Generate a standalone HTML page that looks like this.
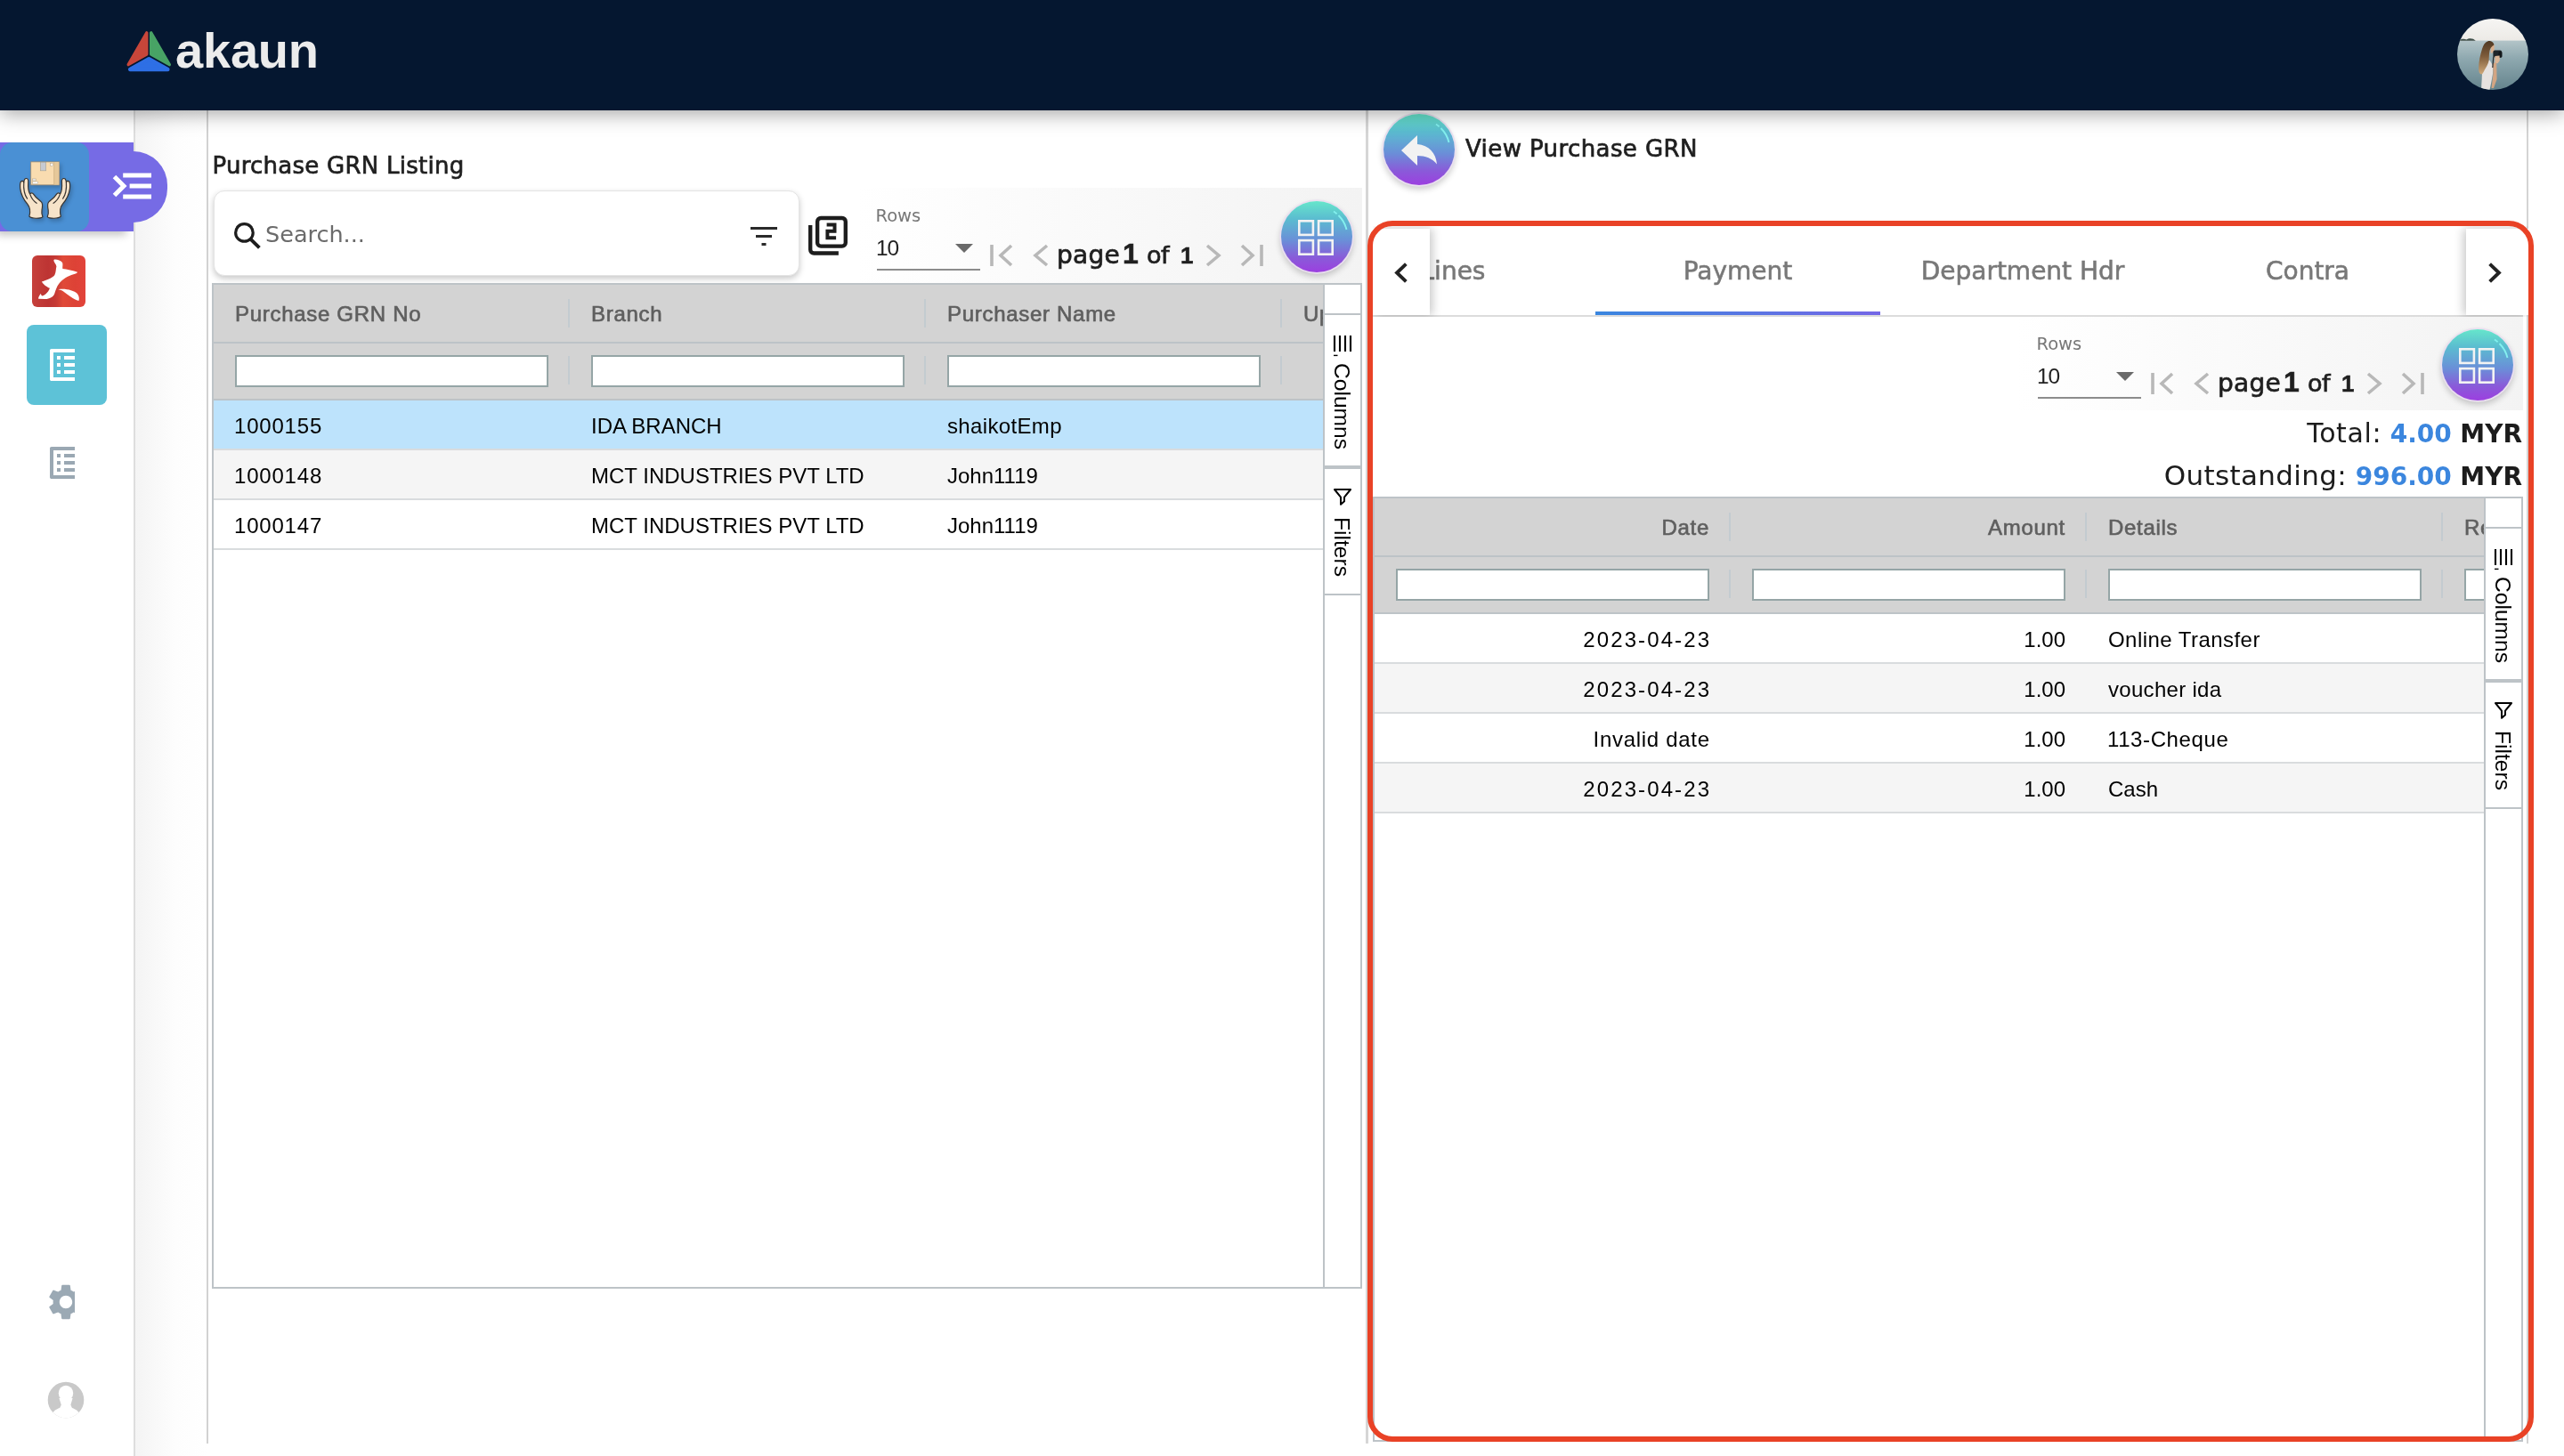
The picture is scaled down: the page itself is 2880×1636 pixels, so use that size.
<!DOCTYPE html>
<html lang="en">
<head>
<meta charset="utf-8">
<title>Purchase GRN Listing</title>
<style>
*{box-sizing:border-box;margin:0;padding:0}
html,body{width:2880px;height:1636px;overflow:hidden;background:#fff}
body{position:relative;font-family:"Liberation Sans",sans-serif;color:#000}
.abs{position:absolute}
.pp{font-family:"DejaVu Sans","Liberation Sans",sans-serif}
.t{position:absolute;white-space:nowrap;line-height:1}
/* header */
#hdr{left:0;top:0;width:2880px;height:124px;background:#051730;box-shadow:0 3px 22px rgba(0,0,0,.38);z-index:50}
/* generic grid */
.grid{position:absolute;border:2px solid #bdc3c7;background:#fff;overflow:hidden}
.ghead{position:absolute;left:0;top:0;height:66px;background:#d3d3d3;border-bottom:2px solid #bdc3c7}
.gfilt{position:absolute;left:0;top:66px;height:64px;background:#d3d3d3;border-bottom:2px solid #bdc3c7}
.hsep{position:absolute;top:16px;width:2px;height:32px;background:#c3cbd0}
.fin{position:absolute;top:13px;height:36px;width:352px;border:2px solid #95a5a6;background:#fff}
.htx{position:absolute;top:0;line-height:66px;font-weight:400;font-size:24px;color:#5f5f5f;white-space:nowrap;letter-spacing:.7px;-webkit-text-stroke:.65px #5f5f5f}
.row{position:absolute;left:0;height:56px;border-bottom:2px solid #d9dcde;background:#fff}
.row.odd{background:#f5f5f5}
.row.sel{background:#bde3fc}
.cell{position:absolute;top:0;line-height:58px;font-size:24px;white-space:nowrap;color:#000}
.side{position:absolute;top:0;bottom:0;width:42px;border-left:2px solid #bdc3c7;background:#fff}
.sbtn{position:absolute;left:0;width:40px}
.vtx{position:absolute;white-space:nowrap;transform-origin:0 0;transform:rotate(90deg);font-size:24.6px;line-height:1;color:#000}
.cbtn{width:80px;height:80px;border-radius:50%;background:linear-gradient(to bottom,#66e6cb 0%,#5bbcd0 25%,#6a8fd8 55%,#8a5ad9 80%,#9c3fe0 100%);box-shadow:0 0 0 1.8px #eadff0,0 4px 7px 1px rgba(0,0,0,.2)}
#root{position:absolute;left:0;top:0;width:2880px;height:1636px;overflow:hidden;transform:translateZ(0)}
.tab{top:37px;width:320px;text-align:center;font-size:28px;color:#787878;-webkit-text-stroke:.55px #787878}
.blue{color:#3b86de}
b{font-weight:700}
.tot{font-size:30px;color:#1c1c1c;line-height:34px}
.tot b{font-size:28px}
.r{text-align:right}
.d{letter-spacing:2.1px;transform:translateX(2.1px)}
.med{-webkit-text-stroke:.7px currentColor}
.gfilt .hsep{top:14px}
</style>
</head>
<body>
<div id="root">

<!-- ===== HEADER ===== -->
<div id="hdr" class="abs">
  <svg class="abs" style="left:138px;top:30px" width="60" height="56" viewBox="0 0 60 56">
    <path d="M26.8 6.9 L26.8 31 L6.2 42.6 Z" fill="#c8463a" stroke="#c8463a" stroke-width="3.4" stroke-linejoin="round"/>
    <path d="M31.7 6.9 L31.7 31 L52.3 42.6 Z" fill="#48a365" stroke="#48a365" stroke-width="3.4" stroke-linejoin="round"/>
    <path d="M29.25 36.2 L8.2 47.9 L50.3 47.9 Z" fill="#2e6fe5" stroke="#2e6fe5" stroke-width="4.6" stroke-linejoin="round"/>
  </svg>
  <div class="t" style="left:197px;top:29px;font-size:56px;font-weight:700;color:#ececec;letter-spacing:-.2px">akaun</div>
  <svg class="abs" id="avatar" style="left:2760px;top:21px" width="80" height="80" viewBox="0 0 80 80">
    <defs>
      <clipPath id="avclip"><circle cx="40" cy="40" r="40"/></clipPath>
      <linearGradient id="sea" x1="0" y1="0" x2="0" y2="1"><stop offset="0" stop-color="#b3c4c8"/><stop offset=".35" stop-color="#8fa9b0"/><stop offset="1" stop-color="#64838c"/></linearGradient>
      <linearGradient id="sky" x1="0" y1="0" x2="0" y2="1"><stop offset="0" stop-color="#f6f5f3"/><stop offset="1" stop-color="#eceae6"/></linearGradient>
      <linearGradient id="hair" x1="0" y1="0" x2="0" y2="1"><stop offset="0" stop-color="#4e3823"/><stop offset=".45" stop-color="#7d5b3a"/><stop offset="1" stop-color="#cfa97a"/></linearGradient>
    </defs>
    <g clip-path="url(#avclip)">
      <rect x="0" y="0" width="80" height="25" fill="url(#sky)"/>
      <rect x="0" y="24.6" width="80" height="56" fill="url(#sea)"/>
      <path d="M2 24.8 C4 22.6 8 22.4 10.5 23.6 C13 21.6 18 21.6 20.8 24.8 Z" fill="#3f4f4a"/>
      <path d="M30.5 50 L36.5 46.5 L40.3 53 L40 62 L38.2 72 L36.5 80 L27 80 L28 62 Z" fill="#e6e2e0"/>
      <path d="M40.3 50 L44.2 49 L44.6 68 L41 78 L38.5 78 L40.5 62 Z" fill="#d2a583"/>
      <path d="M38.4 28.6 L41.8 29.6 L41.6 35.5 L40.2 38.6 L37.5 38.4 Z" fill="#d9b08e"/>
      <path d="M35.2 25 C38.5 24.8 41.3 26.6 41.4 29.5 C38.8 31 37 33 36.5 36 C35.6 40 36 44 35.4 48 C34.4 52 32.4 55 30.8 57.5 C29.8 60 28.6 62 27.3 62.6 C25.5 62 24.6 61 24.4 59 C23.4 52 25.5 42 28 34 C29.5 29 31.5 26 35.2 25 Z" fill="url(#hair)"/>
      <rect x="40.4" y="35.6" width="9.8" height="7.8" rx="2" fill="#1f2529"/>
      <rect x="46.4" y="36.8" width="4" height="7" rx="1.6" fill="#14181b"/>
      <path d="M42.4 42 L47.6 41.6 L47.8 47 L45.5 50.2 L42.2 49.6 Z" fill="#dbb596"/>
      <path d="M40.8 42.5 L39.8 55" stroke="#2a2a2a" stroke-width="1.2" fill="none"/>
    </g>
  </svg>
</div>

<!-- ===== SIDEBAR ===== -->
<div class="abs" id="sidebar" style="left:0;top:124px;width:152px;height:1512px;background:#fff;border-right:2px solid #dedede"></div>
<div class="abs" id="strip" style="left:152px;top:124px;width:82px;height:1512px;background:linear-gradient(to right,#f4f4f4,#fdfdfd 55%,#fff)"></div>
<div class="abs" style="left:232px;top:124px;width:2px;height:1498px;background:#d2d2d2"></div>


<div class="abs" style="left:0;top:160px;width:150px;height:100px;background:#766be5;box-shadow:-6px 6px 9px -2px rgba(0,0,0,.24)"></div>
<div class="abs" style="left:150px;top:170px;width:38px;height:80px;background:#766be5;border-radius:0 40px 40px 0"></div>
<div class="abs" style="left:0;top:160px;width:100px;height:100px;background:#4a90d4;border-radius:14px"></div>
<svg class="abs" style="left:0;top:150px;filter:drop-shadow(2px 3px 2px rgba(0,0,0,.2))" width="200" height="114" viewBox="0 0 2554 1456">
  <rect x="443" y="407" width="408" height="332" fill="#f9dcb0" stroke="#9a866c" stroke-width="10"/>
  <rect x="775" y="412" width="71" height="322" fill="#e6c89a"/>
  <path d="M775 412V734" stroke="#c9ab7c" stroke-width="8"/>
  <rect x="580" y="412" width="80" height="122" fill="#c6cad2" stroke="#a9a395" stroke-width="8"/>
  <rect x="722" y="428" width="40" height="40" fill="#fff" stroke="#b8a78c" stroke-width="7"/>
  <rect x="468" y="650" width="46" height="28" fill="#ececec" stroke="#b8a78c" stroke-width="7"/>
  <rect x="468" y="690" width="76" height="34" fill="#fff" stroke="#b8a78c" stroke-width="7"/>
  <g fill="#f6e3c9" stroke="#38332f" stroke-width="15" stroke-linejoin="round" stroke-linecap="round">
    <path d="M420 1190 C440 1120 430 1060 395 1015 C340 950 300 870 290 790 C285 740 285 710 300 690 C315 675 335 680 342 702 C345 660 360 642 380 645 C400 648 408 665 405 700 C400 770 405 830 430 870 C440 850 465 845 480 870 C510 920 560 950 595 985 C615 1010 610 1050 600 1100 C595 1140 600 1170 612 1195 C590 1222 450 1226 420 1190 Z"/><path d="M342 700 C335 800 350 880 390 935 M435 880 C450 930 490 975 525 1000" fill="none"/>
    <g transform="translate(1292 0) scale(-1 1)"><path d="M420 1190 C440 1120 430 1060 395 1015 C340 950 300 870 290 790 C285 740 285 710 300 690 C315 675 335 680 342 702 C345 660 360 642 380 645 C400 648 408 665 405 700 C400 770 405 830 430 870 C440 850 465 845 480 870 C510 920 560 950 595 985 C615 1010 610 1050 600 1100 C595 1140 600 1170 612 1195 C590 1222 450 1226 420 1190 Z"/><path d="M342 700 C335 800 350 880 390 935 M435 880 C450 930 490 975 525 1000" fill="none"/></g>
  </g>
</svg>
<svg class="abs" style="left:124px;top:192px" width="48" height="34" viewBox="0 0 48 34"><path d="M4.5 6.5L15 17L4.5 27.5" fill="none" stroke="#fff" stroke-width="5"/><path d="M14.2 5H46 M21.6 17H46 M14.2 29H46" stroke="#fff" stroke-width="5" fill="none"/></svg>
<!-- red app icon -->
<div class="abs" style="left:36px;top:287px;width:60px;height:58px;border-radius:6px;background:linear-gradient(to right,#c6403b 0%,#bd3433 30%,#c63a35 45%,#e04a38 58%,#dd4236 80%,#e2433a 100%)"></div>
<svg class="abs" style="left:20px;top:270px" width="160" height="91" viewBox="0 0 2560 1456"><path fill="#fff" d="M655 345 C700 338 770 360 800 400 C815 430 800 470 805 510 C880 520 1000 540 1072 570 C1062 592 1040 600 1000 612 C900 640 800 700 740 780 C700 830 680 900 660 960 C640 1020 560 1062 480 1056 L370 1052 C365 1020 390 990 410 958 L432 1000 C480 990 540 950 575 860 C540 850 480 820 430 745 C500 720 600 690 650 640 C690 590 680 520 695 470 C690 430 650 400 645 365 Z"/><path fill="#fff" d="M725 885 C850 860 1000 900 1070 960 C1100 1000 1110 1050 1095 1088 C1000 1060 900 980 820 920 C790 900 760 890 725 885 Z"/></svg>
<!-- teal active -->
<div class="abs" style="left:30px;top:365px;width:90px;height:90px;border-radius:8px;background:#5dc2d7"></div>
<div class="abs" style="left:50px;top:386px;width:34px;height:48px;overflow:hidden"><svg width="48" height="48" viewBox="0 0 24 24"><path fill="#fff" d="M19 5v14H5V5h14m1.1-2H3.9c-.5 0-.9.4-.9.9v16.2c0 .4.4.9.9.9h16.2c.4 0 .9-.5.9-.9V3.9c0-.5-.5-.9-.9-.9zM11 7h6v2h-6V7zm0 4h6v2h-6v-2zm0 4h6v2h-6zM7 7h2v2H7zm0 4h2v2H7zm0 4h2v2H7z"/></svg></div>
<div class="abs" style="left:50px;top:496px;width:34px;height:48px;overflow:hidden"><svg width="48" height="48" viewBox="0 0 24 24"><path fill="#9aa8b3" d="M19 5v14H5V5h14m1.1-2H3.9c-.5 0-.9.4-.9.9v16.2c0 .4.4.9.9.9h16.2c.4 0 .9-.5.9-.9V3.9c0-.5-.5-.9-.9-.9zM11 7h6v2h-6V7zm0 4h6v2h-6v-2zm0 4h6v2h-6zM7 7h2v2H7zm0 4h2v2H7zm0 4h2v2H7z"/></svg></div>
<div class="abs" style="left:50px;top:1439px;width:34px;height:48px;overflow:hidden"><svg width="48" height="48" viewBox="0 0 24 24"><path fill="#9ba9b4" d="M19.14 12.94c.04-.3.06-.61.06-.94 0-.32-.02-.64-.07-.94l2.03-1.58c.18-.14.23-.41.12-.61l-1.92-3.32c-.12-.22-.37-.29-.59-.22l-2.39.96c-.5-.38-1.03-.7-1.62-.94l-.36-2.54c-.04-.24-.24-.41-.48-.41h-3.84c-.24 0-.43.17-.47.41l-.36 2.54c-.59.24-1.13.57-1.62.94l-2.39-.96c-.22-.08-.47 0-.59.22L2.74 8.87c-.12.21-.08.47.12.61l2.03 1.58c-.05.3-.09.63-.09.94s.02.64.07.94l-2.03 1.58c-.18.14-.23.41-.12.61l1.92 3.32c.12.22.37.29.59.22l2.39-.96c.5.38 1.03.7 1.62.94l.36 2.54c.05.24.24.41.48.41h3.84c.24 0 .44-.17.47-.41l.36-2.54c.59-.24 1.13-.56 1.62-.94l2.39.96c.22.08.47 0 .59-.22l1.92-3.32c.12-.22.07-.47-.12-.61l-2.01-1.58zM12 15.6c-1.98 0-3.6-1.62-3.6-3.6s1.62-3.6 3.6-3.6 3.6 1.62 3.6 3.6-1.62 3.6-3.6 3.6z"/></svg></div>
<svg class="abs" style="left:52px;top:1551px" width="44" height="44" viewBox="0 0 44 44"><defs><clipPath id="avc"><circle cx="22" cy="22" r="20.3"/></clipPath></defs><circle cx="22" cy="22" r="20.3" fill="#c9c9c9"/><g clip-path="url(#avc)" fill="#fff"><ellipse cx="22" cy="14.4" rx="8.2" ry="8.7"/><path d="M14.4 20 L16.8 27.5 L15.2 31 L28.9 31 L27.4 27.5 L29.6 20 Z"/><ellipse cx="22" cy="51" rx="20.8" ry="21.3"/></g></svg>

<!-- ===== LEFT PANEL ===== -->
<div class="t pp med" style="left:238.5px;top:172.5px;font-size:26px;color:#1f1f1f;letter-spacing:.25px">Purchase GRN Listing</div>


<!-- toolbar background -->
<div class="abs" style="left:240px;top:211px;width:1290px;height:108px;background:linear-gradient(to right,#ffffff 56%,#f3f3f3)"></div>
<!-- search box -->
<div class="abs" id="search" style="left:240px;top:214px;width:658px;height:96px;border-radius:12px;background:#fff;border:1px solid #e4e4e4;box-shadow:0 3px 7px rgba(0,0,0,.22)">
  <svg class="abs" style="left:20.5px;top:34px" width="32" height="32" viewBox="0 0 34 34"><circle cx="13.2" cy="13.2" r="10.4" fill="none" stroke="#1d1d1d" stroke-width="3.4"/><path d="M20.6 20.8 L31.2 31.2" stroke="#1d1d1d" stroke-width="4.2"/></svg>
  <div class="t pp" style="left:57px;top:36px;font-size:25.5px;color:#6b6b6b;letter-spacing:0">Search...</div>
  <svg class="abs" style="left:600px;top:38px" width="36" height="26" viewBox="0 0 36 26"><path d="M2 3.5H32 M8 12.5H26 M14.5 21.5H19.5" stroke="#2a2a2a" stroke-width="3.2" fill="none"/></svg>
</div>
<!-- copy icon -->
<svg class="abs" style="left:906px;top:240.5px" width="48" height="47.5" viewBox="0 0 48 48"><rect x="12" y="4" width="32" height="32" rx="4" fill="none" stroke="#1d1d1d" stroke-width="4.4"/><path d="M4 12V40a4 4 0 0 0 4 4H36" fill="none" stroke="#1d1d1d" stroke-width="4.4"/><path d="M22.6 11.6H31.6V19H23.4V26.6H33.2" fill="none" stroke="#1d1d1d" stroke-width="4"/></svg>
<div class="abs" id="tb1" style="left:0;top:0">
<!-- rows select -->
<div class="t pp" style="left:983.5px;top:232.5px;font-size:19.5px;color:#777">Rows</div>
<div class="t" style="left:984px;top:267px;font-size:24.5px;color:#222;letter-spacing:-1.2px">10</div>
<svg class="abs" style="left:1072px;top:273px" width="22" height="12" viewBox="0 0 22 12"><path d="M1 1H21L11 11Z" fill="#6a6a6a"/></svg>
<div class="abs" style="left:985px;top:302px;width:116px;height:2px;background:#8c8c8c"></div>
<!-- paginator -->
<svg class="abs" style="left:1110px;top:273px" width="30" height="28" viewBox="0 0 30 28"><path d="M4 2V26" stroke="#b8b8b8" stroke-width="3.6" fill="none"/><path d="M26 3L14 14L26 25" stroke="#b8b8b8" stroke-width="3.6" fill="none"/></svg>
<svg class="abs" style="left:1158px;top:273px" width="22" height="28" viewBox="0 0 22 28"><path d="M18 3L5 14L18 25" stroke="#b8b8b8" stroke-width="3.6" fill="none"/></svg>
<div class="t pp med" style="left:1187px;top:272.5px;font-size:28px;color:#1f1f1f;letter-spacing:.3px">page</div>
<div class="t" style="left:1261px;top:269px;font-size:32px;font-weight:700;color:#1f1f1f;-webkit-text-stroke:.6px #1f1f1f">1</div>
<div class="t pp med" style="left:1288px;top:273px;font-size:27px;color:#1f1f1f;letter-spacing:-.5px">of</div>
<div class="t" style="left:1326px;top:274px;font-size:26px;font-weight:700;color:#1f1f1f;-webkit-text-stroke:.5px #1f1f1f">1</div>
<svg class="abs" style="left:1352px;top:273px" width="22" height="28" viewBox="0 0 22 28"><path d="M4 3L17 14L4 25" stroke="#b8b8b8" stroke-width="3.6" fill="none"/></svg>
<svg class="abs" style="left:1391px;top:273px" width="30" height="28" viewBox="0 0 30 28"><path d="M26 2V26" stroke="#b8b8b8" stroke-width="3.6" fill="none"/><path d="M4 3L16 14L4 25" stroke="#b8b8b8" stroke-width="3.6" fill="none"/></svg>
<!-- circle button -->
<div class="abs cbtn" style="left:1438.5px;top:225.5px">
  <svg class="abs" style="left:19.5px;top:21.5px" width="40" height="40" viewBox="0 0 40 40"><g fill="none" stroke="#f3f3f3" stroke-width="2.6"><rect x="1.3" y="1.3" width="15.6" height="15.6"/><rect x="23.1" y="1.3" width="15.6" height="15.6"/><rect x="1.3" y="23.1" width="15.6" height="15.6"/><rect x="23.1" y="23.1" width="15.6" height="15.6"/></g></svg>
  <svg class="abs" style="left:0;top:0" width="82" height="82" viewBox="0 0 82 82"><path d="M59 11.5 Q70.5 19.5 73.5 32" fill="none" stroke="#86f2f0" stroke-width="1.9" stroke-dasharray="4.5 2.6 40" opacity=".95"/></svg>
</div>


</div>

<!-- left grid -->
<div class="grid" id="g1" style="left:238px;top:318px;width:1292px;height:1130px">
  <div class="ghead" style="width:1246px">
    <div class="htx" style="left:24px">Purchase GRN No</div><div class="hsep" style="left:398px"></div>
    <div class="htx" style="left:424px">Branch</div><div class="hsep" style="left:798px"></div>
    <div class="htx" style="left:824px">Purchaser Name</div><div class="hsep" style="left:1198px"></div>
    <div class="htx" style="left:1224px">Updated Date</div>
  </div>
  <div class="gfilt" style="width:1246px">
    <div class="fin" style="left:24px"></div><div class="hsep" style="left:398px"></div>
    <div class="fin" style="left:424px"></div><div class="hsep" style="left:798px"></div>
    <div class="fin" style="left:824px"></div><div class="hsep" style="left:1198px"></div>
  </div>
  <div class="row sel" style="top:130px;width:1246px"><div class="cell" style="left:23px;letter-spacing:.8px">1000155</div><div class="cell" style="left:424px">IDA BRANCH</div><div class="cell" style="left:824px;letter-spacing:.35px">shaikotEmp</div></div>
  <div class="row odd" style="top:186px;width:1246px"><div class="cell" style="left:23px;letter-spacing:.8px">1000148</div><div class="cell" style="left:424px">MCT INDUSTRIES PVT LTD</div><div class="cell" style="left:824px">John1119</div></div>
  <div class="row" style="top:242px;width:1246px"><div class="cell" style="left:23px;letter-spacing:.8px">1000147</div><div class="cell" style="left:424px">MCT INDUSTRIES PVT LTD</div><div class="cell" style="left:824px">John1119</div></div>
  <div class="side" style="left:1246px">
    <div class="abs" style="left:0;top:32px;width:40px;height:2px;background:#bdc3c7"></div>
    <svg class="abs" style="left:9px;top:57px" width="22" height="24" viewBox="0 0 22 24"><path d="M2 0V18 M8 0V18 M14 0V18 M20 0V18" stroke="#000" stroke-width="2.1" fill="none"/><path d="M1 22.4H5.5" stroke="#000" stroke-width="1.4"/></svg>
    <div class="vtx" style="left:31px;top:87.5px">Columns</div>
    <div class="abs" style="left:0;top:203px;width:40px;height:4px;background:#bdc3c7"></div>
    <svg class="abs" style="left:8px;top:227px" width="24" height="24" viewBox="0 0 24 24"><path d="M3 3H21L14 11.6V16.2L10 19.8V11.6Z" fill="none" stroke="#000" stroke-width="2" stroke-linejoin="round"/></svg>
    <div class="vtx" style="left:31px;top:261px">Filters</div>
    <div class="abs" style="left:0;top:347px;width:40px;height:2px;background:#bdc3c7"></div>
  </div>
</div>

<!-- ===== RIGHT PANEL ===== -->
<div class="t pp med" style="left:1646px;top:154px;font-size:26px;color:#1f1f1f;letter-spacing:.4px">View Purchase GRN</div>
<div class="abs" style="left:1534px;top:124px;width:3px;height:1498px;background:#d6d6d6"></div>
<div class="abs" style="left:2838px;top:124px;width:2px;height:1498px;background:#d4d4d4"></div>
<!-- back button -->
<div class="abs cbtn" style="left:1554px;top:128px">
  <svg class="abs" style="left:17px;top:19.5px" width="48" height="44" viewBox="0 0 48 44"><path d="M21 4 L3 21 L21 38 V27 C30 27 38 30 43 36.5 C42 24 34 15 21 14 Z" fill="#f2f2f2"/></svg>
  <svg class="abs" style="left:0;top:0" width="82" height="82" viewBox="0 0 82 82"><path d="M59 11.5 Q70.5 19.5 73.5 32" fill="none" stroke="#86f2f0" stroke-width="1.9" stroke-dasharray="4.5 2.6 40" opacity=".95"/></svg>
</div>
<!-- tabs -->
<div class="abs" id="tabs" style="left:1542px;top:254px;width:1298px;height:102px;overflow:hidden">
  <div class="abs" style="left:0;top:100px;width:1292px;height:2px;background:#dcdcdc"></div>
  <div class="t pp tab" style="left:-70px">Lines</div>
  <div class="t pp tab" style="left:250px">Payment</div>
  <div class="t pp tab" style="left:570px">Department Hdr</div>
  <div class="t pp tab" style="left:890px">Contra</div>
  <div class="abs" style="left:250px;top:96px;width:320px;height:4px;background:linear-gradient(to right,#3a86df,#7467e6)"></div>
  <div class="abs" style="left:0;top:3px;width:64px;height:97px;background:#fff;box-shadow:3px 0 10px rgba(0,0,0,.22)">
    <svg class="abs" style="left:23px;top:36.5px" width="18" height="25" viewBox="0 0 20 28"><path d="M16 3L4.5 14L16 25" fill="none" stroke="#222" stroke-width="4.4"/></svg>
  </div>
  <div class="abs" style="left:1228px;top:3px;width:70px;height:97px;background:#fff;box-shadow:-3px 0 10px rgba(0,0,0,.22)">
    <svg class="abs" style="left:22.5px;top:36.5px" width="18" height="25" viewBox="0 0 20 28"><path d="M4 3L15.5 14L4 25" fill="none" stroke="#222" stroke-width="4.4"/></svg>
  </div>
</div>
<!-- right toolbar -->
<div class="abs" style="left:1542px;top:356px;width:1292px;height:105px;background:linear-gradient(to right,#ffffff 56%,#f3f3f3)"></div>
<div class="abs" id="tb2" style="left:1304px;top:144px">
<!-- rows select -->
<div class="t pp" style="left:983.5px;top:232.5px;font-size:19.5px;color:#777">Rows</div>
<div class="t" style="left:984px;top:267px;font-size:24.5px;color:#222;letter-spacing:-1.2px">10</div>
<svg class="abs" style="left:1072px;top:273px" width="22" height="12" viewBox="0 0 22 12"><path d="M1 1H21L11 11Z" fill="#6a6a6a"/></svg>
<div class="abs" style="left:985px;top:302px;width:116px;height:2px;background:#8c8c8c"></div>
<!-- paginator -->
<svg class="abs" style="left:1110px;top:273px" width="30" height="28" viewBox="0 0 30 28"><path d="M4 2V26" stroke="#b8b8b8" stroke-width="3.6" fill="none"/><path d="M26 3L14 14L26 25" stroke="#b8b8b8" stroke-width="3.6" fill="none"/></svg>
<svg class="abs" style="left:1158px;top:273px" width="22" height="28" viewBox="0 0 22 28"><path d="M18 3L5 14L18 25" stroke="#b8b8b8" stroke-width="3.6" fill="none"/></svg>
<div class="t pp med" style="left:1187px;top:272.5px;font-size:28px;color:#1f1f1f;letter-spacing:.3px">page</div>
<div class="t" style="left:1261px;top:269px;font-size:32px;font-weight:700;color:#1f1f1f;-webkit-text-stroke:.6px #1f1f1f">1</div>
<div class="t pp med" style="left:1288px;top:273px;font-size:27px;color:#1f1f1f;letter-spacing:-.5px">of</div>
<div class="t" style="left:1326px;top:274px;font-size:26px;font-weight:700;color:#1f1f1f;-webkit-text-stroke:.5px #1f1f1f">1</div>
<svg class="abs" style="left:1352px;top:273px" width="22" height="28" viewBox="0 0 22 28"><path d="M4 3L17 14L4 25" stroke="#b8b8b8" stroke-width="3.6" fill="none"/></svg>
<svg class="abs" style="left:1391px;top:273px" width="30" height="28" viewBox="0 0 30 28"><path d="M26 2V26" stroke="#b8b8b8" stroke-width="3.6" fill="none"/><path d="M4 3L16 14L4 25" stroke="#b8b8b8" stroke-width="3.6" fill="none"/></svg>
<!-- circle button -->
<div class="abs cbtn" style="left:1438.5px;top:225.5px">
  <svg class="abs" style="left:19.5px;top:21.5px" width="40" height="40" viewBox="0 0 40 40"><g fill="none" stroke="#f3f3f3" stroke-width="2.6"><rect x="1.3" y="1.3" width="15.6" height="15.6"/><rect x="23.1" y="1.3" width="15.6" height="15.6"/><rect x="1.3" y="23.1" width="15.6" height="15.6"/><rect x="23.1" y="23.1" width="15.6" height="15.6"/></g></svg>
  <svg class="abs" style="left:0;top:0" width="82" height="82" viewBox="0 0 82 82"><path d="M59 11.5 Q70.5 19.5 73.5 32" fill="none" stroke="#86f2f0" stroke-width="1.9" stroke-dasharray="4.5 2.6 40" opacity=".95"/></svg>
</div>


</div>
<!-- totals -->
<div class="t pp tot" style="right:47px;top:469.5px"><span style="letter-spacing:.6px">Total:</span> <b class="blue">4.00</b> <b>MYR</b></div>
<div class="t pp tot" style="right:47px;top:517px"><span style="font-size:31px;letter-spacing:.35px">Outstanding:</span> <b class="blue">996.00</b> <b>MYR</b></div>

<!-- right grid -->
<div class="grid" id="g2" style="left:1542px;top:558px;width:1292px;height:1062px">
  <div class="ghead" style="width:1246px">
    <div class="htx r" style="left:0;width:376px">Date</div><div class="hsep" style="left:398px"></div>
    <div class="htx r" style="left:400px;width:376px">Amount</div><div class="hsep" style="left:798px"></div>
    <div class="htx" style="left:824px">Details</div><div class="hsep" style="left:1198px"></div>
    <div class="htx" style="left:1224px">Remarks</div>
  </div>
  <div class="gfilt" style="width:1246px">
    <div class="fin" style="left:24px"></div><div class="hsep" style="left:398px"></div>
    <div class="fin" style="left:424px"></div><div class="hsep" style="left:798px"></div>
    <div class="fin" style="left:824px"></div><div class="hsep" style="left:1198px"></div>
    <div class="fin" style="left:1224px"></div>
  </div>
  <div class="row" style="top:130px;width:1246px"><div class="cell r d" style="left:0;width:376px">2023-04-23</div><div class="cell r" style="left:400px;width:376px">1.00</div><div class="cell" style="left:824px;letter-spacing:.45px">Online Transfer</div></div>
  <div class="row odd" style="top:186px;width:1246px"><div class="cell r d" style="left:0;width:376px">2023-04-23</div><div class="cell r" style="left:400px;width:376px">1.00</div><div class="cell" style="left:824px;letter-spacing:.3px">voucher ida</div></div>
  <div class="row" style="top:242px;width:1246px"><div class="cell r" style="left:0;width:376px;letter-spacing:.7px;transform:translateX(.7px)">Invalid date</div><div class="cell r" style="left:400px;width:376px">1.00</div><div class="cell" style="left:823px;letter-spacing:.6px">113-Cheque</div></div>
  <div class="row odd" style="top:298px;width:1246px"><div class="cell r d" style="left:0;width:376px">2023-04-23</div><div class="cell r" style="left:400px;width:376px">1.00</div><div class="cell" style="left:824px">Cash</div></div>
  <div class="side" style="left:1246px">
    <div class="abs" style="left:0;top:32px;width:40px;height:2px;background:#bdc3c7"></div>
    <svg class="abs" style="left:9px;top:57px" width="22" height="24" viewBox="0 0 22 24"><path d="M2 0V18 M8 0V18 M14 0V18 M20 0V18" stroke="#000" stroke-width="2.1" fill="none"/><path d="M1 22.4H5.5" stroke="#000" stroke-width="1.4"/></svg>
    <div class="vtx" style="left:31px;top:87.5px">Columns</div>
    <div class="abs" style="left:0;top:203px;width:40px;height:4px;background:#bdc3c7"></div>
    <svg class="abs" style="left:8px;top:227px" width="24" height="24" viewBox="0 0 24 24"><path d="M3 3H21L14 11.6V16.2L10 19.8V11.6Z" fill="none" stroke="#000" stroke-width="2" stroke-linejoin="round"/></svg>
    <div class="vtx" style="left:31px;top:261px">Filters</div>
    <div class="abs" style="left:0;top:347px;width:40px;height:2px;background:#bdc3c7"></div>
  </div>
</div>
<!-- red highlight -->
<div class="abs" style="left:1536px;top:248px;width:1310px;height:1372px;border:6px solid #e94226;border-radius:28px;z-index:20"></div>


</div>
</body>
</html>
